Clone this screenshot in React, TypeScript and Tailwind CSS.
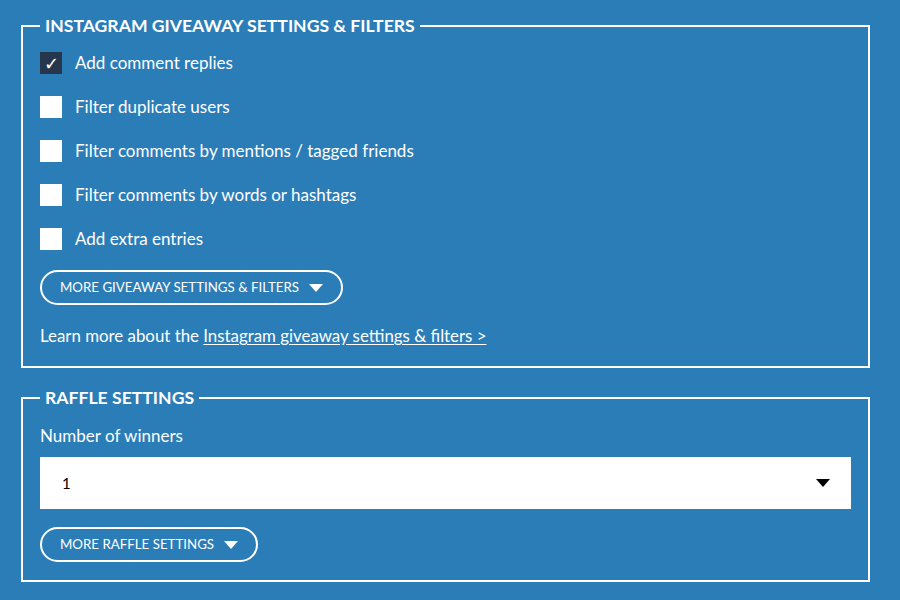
import React from "react";

const font = { fontFamily: "Lato, 'Open Sans', sans-serif" };

function Caret({ className = "" }: { className?: string }) {
  return (
    <svg viewBox="0 0 14 8" className={className} fill="currentColor">
      <path d="M0 0h14L7 8z" />
    </svg>
  );
}

function CheckRow({ label, checked }: { label: string; checked?: boolean }) {
  return (
    <label className="flex items-center h-[44px] gap-[13px] cursor-pointer">
      <span
        className={
          checked
            ? "w-[22px] h-[22px] bg-[#26364d] flex items-center justify-center text-white text-[18px] leading-none"
            : "w-[22px] h-[22px] bg-white"
        }
      >
        {checked ? "✓" : null}
      </span>
      <span className="text-white text-[17px]">{label}</span>
    </label>
  );
}

function PillButton({ label }: { label: string }) {
  return (
    <button className="h-[35px] pl-[18px] pr-[18px] rounded-full border-2 border-white text-white text-[13.3px] flex items-center gap-[10px] cursor-pointer">
      <span>{label}</span>
      <Caret className="w-[14px] h-[8px]" />
    </button>
  );
}

export default function App() {
  const rows = [
    { label: "Add comment replies", checked: true },
    { label: "Filter duplicate users" },
    { label: "Filter comments by mentions / tagged friends" },
    { label: "Filter comments by words or hashtags" },
    { label: "Add extra entries" },
  ];

  return (
    <div className="w-[900px] h-[600px] bg-[#2b7db8] overflow-hidden pt-[14px] pl-[21px] pr-[30px]" style={font}>
      <fieldset className="border-2 border-white px-[17px] pb-[18px]">
        <legend className="px-[5px] text-white font-bold text-[17.6px] leading-[24px]">
          INSTAGRAM GIVEAWAY SETTINGS &amp; FILTERS
        </legend>
        <div className="pt-[3px] flex flex-col">
          {rows.map((r) => (
            <CheckRow key={r.label} label={r.label} checked={r.checked} />
          ))}
        </div>
        <div className="mt-[9px]">
          <PillButton label="MORE GIVEAWAY SETTINGS & FILTERS" />
        </div>
        <p className="mt-[19px] text-white text-[16.85px] leading-[24px]">
          Learn more about the{" "}
          <a href="#" className="underline underline-offset-2">
            Instagram giveaway settings &amp; filters &gt;
          </a>
        </p>
      </fieldset>

      <fieldset className="mt-[18px] border-2 border-white px-[17px] pb-[18px]">
        <legend className="px-[5px] text-white font-bold text-[17.6px] leading-[24px]">
          RAFFLE SETTINGS
        </legend>
        <div className="pt-[14px] text-white text-[17px] leading-[24px]">Number of winners</div>
        <div className="mt-[9px] h-[52px] bg-white flex items-center justify-between pl-[22px] pr-[21px]">
          <span className="text-[15px] text-black">1</span>
          <Caret className="w-[14px] h-[8px] text-black" />
        </div>
        <div className="mt-[18px]">
          <PillButton label="MORE RAFFLE SETTINGS" />
        </div>
      </fieldset>
    </div>
  );
}
